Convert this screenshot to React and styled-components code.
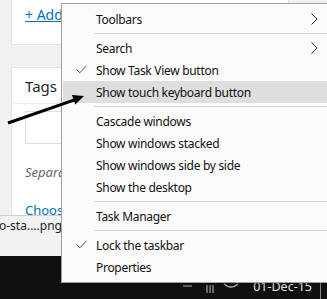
import React from 'react'
import styled, { createGlobalStyle } from 'styled-components'

const GlobalStyle = createGlobalStyle`
  html, body { margin: 0; padding: 0; }
  body { font-family: "Noto Sans", "Open Sans", sans-serif; }
`

const Screen = styled.div`
  position: relative;
  width: 327px;
  height: 299px;
  overflow: hidden;
  display: flex;
  flex-direction: column;
`

const Content = styled.div`
  height: 218px;
  background: #f1f1f1;
  padding-left: 11px;
  display: flex;
  flex-direction: column;
  gap: 22px;
  overflow: hidden;
`

const Box = styled.div`
  width: 278px;
  box-sizing: border-box;
  background: #fff;
  border: 1px solid #e5e5e5;
  border-top: ${p => (p.$cut ? 'none' : '1px solid #e5e5e5')};
  height: ${p => p.$h || 'auto'};
  flex: ${p => (p.$grow ? 1 : 'none')};
`

const Visible = styled.div`
  width: 49px;
  overflow: hidden;
  white-space: nowrap;
  margin: ${p => p.$m || 0};
`

const LinkText = styled.a`
  display: inline-block;
  color: #0073aa;
  text-decoration: underline;
  font-size: ${p => p.$size || '13px'};
  margin: ${p => p.$m || 0};
`

const BoxHead = styled.div`
  height: 35px;
  border-bottom: 1px solid #eee;
  padding-left: 13px;
  display: flex;
  align-items: center;
  font-size: 15px;
  color: #23282d;
`

const BoxBody = styled.div`
  padding: 7px 0 0 13px;
  display: flex;
  flex-direction: column;
`

const Input = styled.div`
  height: 33px;
  box-sizing: border-box;
  border: 1px solid #ddd;
  width: 200px;
`

const Hint = styled.span`
  font-size: 13px;
  font-style: italic;
  color: #666;
`

const DownloadBar = styled.div`
  height: 41px;
  box-sizing: border-box;
  background: #f2f2f2;
  border-top: 1px solid #d0d0d0;
  padding-top: 1px;
  font-size: 12px;
  color: #222;
  span { margin-left: -1px; }
`

const Taskbar = styled.div`
  flex: 1;
  background: #101010;
  display: flex;
  justify-content: flex-end;
  align-items: flex-start;
  padding-top: 23px;
`

const Tray = styled.svg`
  margin-top: 4px;
  margin-right: 10px;
`

const Clock = styled.div`
  color: #e8e8e8;
  font-size: 12.5px;
  line-height: 16px;
  margin-right: 8px;
`

const DesktopEdge = styled.div`
  width: 1px;
  height: 20px;
  background: #8a8a8a;
  margin-right: 6px;
`

const Menu = styled.div`
  position: absolute;
  left: 61px;
  top: 3px;
  width: 268px;
  box-sizing: border-box;
  background: #fbfbfb;
  border: 1px solid #a0a0a0;
  box-shadow: 2px 2px 3px rgba(0, 0, 0, 0.25);
  padding: 4px 1px;
  font-size: 12px;
  letter-spacing: -0.3px;
  color: #111;
  z-index: 2;
`

const Item = styled.div`
  height: 22px;
  display: flex;
  align-items: center;
  padding-left: 33px;
  padding-right: 9px;
  position: relative;
  background: ${p => (p.$hover ? '#dedede' : 'transparent')};
`

const Check = styled.svg`
  position: absolute;
  left: 13px;
  top: 6px;
`

const Chevron = styled.svg`
  margin-left: auto;
`

const Separator = styled.div`
  height: 7px;
  display: flex;
  align-items: center;
  padding-left: 31px;
  &::after {
    content: "";
    flex: 1;
    height: 1px;
    background: #d4d4d4;
  }
`

const Arrow = styled.svg`
  position: absolute;
  left: 0;
  top: 0;
  z-index: 3;
  pointer-events: none;
`

const items = [
  { label: 'Toolbars', sub: true },
  'sep',
  { label: 'Search', sub: true },
  { label: 'Show Task View button', checked: true },
  { label: 'Show touch keyboard button', hover: true },
  'sep',
  { label: 'Cascade windows' },
  { label: 'Show windows stacked' },
  { label: 'Show windows side by side' },
  { label: 'Show the desktop' },
  'sep',
  { label: 'Task Manager' },
  'sep',
  { label: 'Lock the taskbar', checked: true },
  { label: 'Properties' },
]

const App = () => {
  return (
    <Screen>
      <GlobalStyle />
      <Content>
        <Box $cut $h="45px">
          <LinkText $size="14px" $m="5px 0 0 13px">+ Add</LinkText>
        </Box>
        <Box $grow>
          <BoxHead>Tags</BoxHead>
          <BoxBody>
            <Input />
            <Visible $m="16px 0 0 0"><Hint>Separate tags with commas</Hint></Visible>
            <Visible $m="16px 0 0 0"><LinkText>Choose from the most used tags</LinkText></Visible>
          </BoxBody>
        </Box>
      </Content>
      <DownloadBar><span>o-sta....png</span></DownloadBar>
      <Taskbar>
        <Tray width="60" height="10" viewBox="0 0 60 10">
          <line x1="0" y1="3" x2="9" y2="3" stroke="#bbb" strokeWidth="1" />
          <line x1="24" y1="2" x2="24" y2="10" stroke="#bbb" />
          <line x1="27" y1="2" x2="27" y2="10" stroke="#bbb" />
          <line x1="30" y1="2" x2="30" y2="10" stroke="#bbb" />
          <path d="M41 1 Q48 7 55 1" fill="none" stroke="#bbb" strokeWidth="1.5" />
        </Tray>
        <Clock>01-Dec-15</Clock>
        <DesktopEdge />
      </Taskbar>
      <Menu>
        {items.map((it, i) =>
          it === 'sep' ? (
            <Separator key={i} />
          ) : (
            <Item key={i} $hover={it.hover}>
              {it.checked && (
                <Check width="11" height="9" viewBox="0 0 11 9">
                  <path d="M0.5 4.5 L3.8 7.8 L10.5 0.8" fill="none" stroke="#555" strokeWidth="1" />
                </Check>
              )}
              {it.label}
              {it.sub && (
                <Chevron width="7" height="12" viewBox="0 0 7 12">
                  <path d="M0.5 0.5 L6 6 L0.5 11.5" fill="none" stroke="#333" strokeWidth="1" />
                </Chevron>
              )}
            </Item>
          )
        )}
      </Menu>
      <Arrow width="327" height="299" viewBox="0 0 327 299">
        <line x1="8" y1="123" x2="76" y2="99.3" stroke="#000" strokeWidth="3" />
        <polygon points="84,96 75.3,104.4 71.9,94.9" fill="#000" />
      </Arrow>
    </Screen>
  )
}

export default App
